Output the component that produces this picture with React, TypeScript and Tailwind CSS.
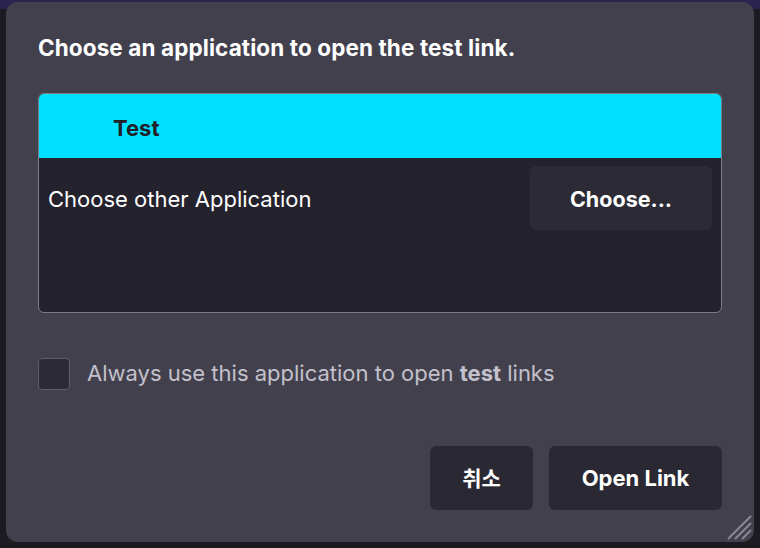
import React from "react";

const font = { fontFamily: "Inter, 'Noto Sans CJK KR', sans-serif" };

function ResizeGrip() {
  return (
    <svg width="26" height="26" viewBox="0 0 26 26" className="absolute right-[2px] bottom-[2px]">
      <g stroke="#8a8894" strokeWidth="2">
        <line x1="2" y1="25" x2="25" y2="2" />
        <line x1="9" y1="25" x2="25" y2="9" />
        <line x1="16" y1="25" x2="25" y2="16" />
      </g>
    </svg>
  );
}

export default function App() {
  return (
    <div
      className="w-[760px] h-[548px] overflow-hidden bg-[linear-gradient(180deg,#2b2450_0px,#2b2450_9px,#1c1b21_9px)] pt-[2px] px-[6px] pb-[6px]"
      style={font}
    >
      <div className="relative h-full rounded-[12px] bg-[#42404d] px-[32px] pt-[32px] flex flex-col">
        <h1 className="text-[22.5px] leading-[28px] font-bold text-white tracking-[0.1px]">
          Choose an application to open the test link.
        </h1>

        {/* application list */}
        <div className="mt-[31px] h-[220px] rounded-[6px] border-[1.5px] border-[#7d7b86] bg-[#24222c] overflow-hidden">
          <div className="h-[64px] bg-[#00e1ff] flex items-center pl-[74px] pt-[4px]">
            <span className="text-[22px] font-bold text-[#22212a]">Test</span>
          </div>
          <div className="flex items-center justify-between pl-[9px] pr-[9px] pt-[8px]">
            <span className="text-[22px] text-white pt-[2px]">Choose other Application</span>
            <button className="h-[64px] w-[182px] rounded-[6px] bg-[#2c2a35] text-[21.5px] font-bold text-white pt-[2px]">
              Choose...
            </button>
          </div>
        </div>

        {/* remember choice */}
        <label className="mt-[44px] flex items-center gap-[17px]">
          <span className="h-[32px] w-[32px] rounded-[4px] border-[1.5px] border-[#5f5d69] bg-[#2c2a35]" />
          <span className="text-[22px] text-[#c3c1cb]">
            Always use this application to open <b className="font-bold">test</b> links
          </span>
        </label>

        <div className="mt-[56px] flex justify-end gap-[16px]">
          <button className="h-[64px] w-[103px] rounded-[6px] bg-[#2a2832] text-[21px] font-bold text-white pt-[1px]">
            취소
          </button>
          <button className="h-[64px] w-[173px] rounded-[6px] bg-[#2a2832] text-[22px] font-bold text-white pt-[1px]">
            Open Link
          </button>
        </div>

        <ResizeGrip />
      </div>
    </div>
  );
}
